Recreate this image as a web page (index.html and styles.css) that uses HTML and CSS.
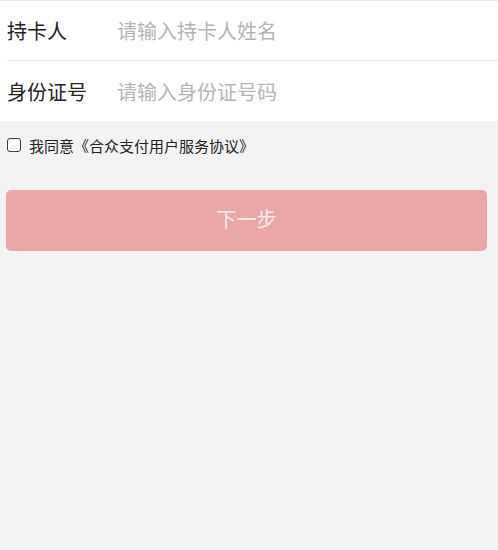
FILE: index.html
```html
<!DOCTYPE html>
<html lang="zh-CN">
<head>
<meta charset="utf-8">
<title>实名认证</title>
<link rel="stylesheet" href="styles.css">
</head>
<body>
  <div class="form">
    <div class="row">
      <span class="label">持卡人</span>
      <input class="field" type="text" placeholder="请输入持卡人姓名">
    </div>
    <div class="row">
      <span class="label">身份证号</span>
      <input class="field" type="text" placeholder="请输入身份证号码">
    </div>
  </div>
  <label class="agree">
    <span class="box"></span>
    <span class="agree-text">我同意《合众支付用户服务协议》</span>
  </label>
  <button class="next" type="button">下一步</button>
</body>
</html>
```
FILE: styles.css
```css
html, body {
  margin: 0;
  padding: 0;
  background: #f3f3f3;
  font-family: "Noto Sans CJK SC", "Noto Sans", sans-serif;
}
.form {
  background: #ffffff;
  border-top: 1px solid #ececec;
  padding-left: 6px;
}
.row {
  display: flex;
  align-items: center;
  height: 59px;
  padding-left: 1px;
}
.row + .row {
  border-top: 1px solid #eeeeee;
  height: 60px;
}
.label {
  width: 110px;
  font-size: 20px;
  color: #222222;
  flex: none;
}
.field {
  flex: 1;
  border: none;
  outline: none;
  background: transparent;
  font-family: inherit;
  font-size: 20px;
  color: #333;
  padding: 0;
  min-width: 0;
}
.field::placeholder {
  color: #b5b5b5;
}
.agree {
  display: flex;
  align-items: center;
  padding: 15px 7px 0;
  height: 18px;
}
.box {
  width: 12px;
  height: 12px;
  border: 1.6px solid #3a3a3a;
  border-radius: 3px;
  background: #fff;
  flex: none;
}
.agree-text {
  margin-left: 8px;
  font-size: 15px;
  color: #222;
}
.next {
  display: block;
  margin: 36px 11px 0 6px;
  width: calc(100% - 17px);
  height: 61px;
  border: none;
  border-radius: 5px;
  background: #e9a7a8;
  color: #fbecec;
  font-family: inherit;
  font-size: 20px;
  padding: 0 0 4px;
}
```
